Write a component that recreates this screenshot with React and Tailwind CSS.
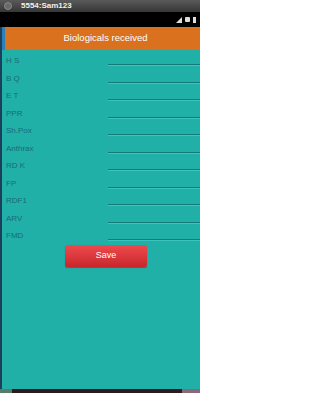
import React from "react";

const labels = ["H S", "B Q", "E T", "PPR", "Sh.Pox", "Anthrax", "RD K", "FP", "RDF1", "ARV", "FMD"];

export default function App() {
  return (
    <div className="w-[200px] h-[400px] overflow-hidden bg-white flex flex-col" style={{ fontFamily: '"Liberation Sans", Arial, sans-serif' }}>
      {/* window title bar */}
      <div className="h-[12px] flex items-center bg-gradient-to-b from-[#5a5a5a] to-[#363636]">
        <div className="ml-[4px] w-[8px] h-[8px] rounded-full bg-[#6a6a6a] border border-[#888]" />
        <span className="ml-[9px] text-[8px] leading-none font-bold text-[#f0f0f0]">5554:Sam123</span>
      </div>
      {/* status bar */}
      <div className="h-[15px] bg-black flex items-center justify-end pr-[4px] gap-[3px]">
        <svg width="6" height="6" viewBox="0 0 6 6"><path d="M0 6 L6 0 L6 6 Z" fill="#ddd" /></svg>
        <div className="w-[5px] h-[5px] bg-[#ddd] rounded-[1px]" />
        <div className="w-[3px] h-[6px] bg-[#ddd]" />
      </div>
      {/* app area */}
      <div className="flex-1 flex flex-col bg-[#20b0a8] border-l-[2px] border-[#1c3f5e]">
        <div className="h-[23px] flex">
          <div className="w-[3px] bg-[#2a80b8]" />
          <div className="flex-1 bg-[#d9711e] flex items-center justify-center pl-[6px] text-[9.5px] text-white">Biologicals received</div>
        </div>
        <div className="pt-[2px] flex flex-col">
          {labels.map((l) => (
            <div key={l} className="h-[17.5px] flex">
              <div className="w-[106px] pl-[4px] pt-[5px] text-[8px] leading-[8px] text-[#1a6b78]">{l}</div>
              <div className="flex-1">
                <div className="h-[13px] border-b border-[#137a77]" />
                <div className="h-px bg-[#3cc4bc]" />
              </div>
            </div>
          ))}
        </div>
        <div className="ml-[63px] w-[82px] h-[22px] rounded-[2px] bg-gradient-to-b from-[#ee4a4e] to-[#c8262c] shadow-[0_1px_1px_rgba(0,0,0,0.3)] flex items-center justify-center text-[9px] text-white">Save</div>
        <div className="flex-1" />
      </div>
      {/* bottom bar */}
      <div className="h-[4px] flex">
        <div className="w-[12px] bg-[#5a7a6a]" />
        <div className="flex-1 bg-[#2a1a22]" />
        <div className="w-[18px] bg-[#8a6a78]" />
      </div>
      <div className="h-[7px] bg-white" />
    </div>
  );
}
